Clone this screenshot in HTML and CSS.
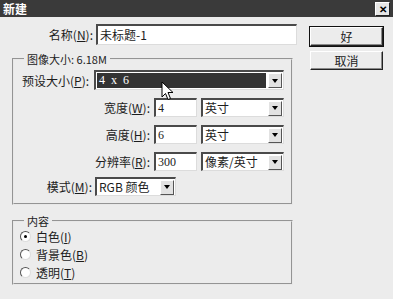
FILE: index.html
```html
<!DOCTYPE html>
<html lang="zh-CN">
<head>
  <meta charset="UTF-8" />
  <title>新建</title>
  <link rel="stylesheet" href="styles.css">
</head>
<body>
  <div class="dialog">
    <div class="titlebar">
      <span class="title">新建</span>
      <span class="close">✕</span>
    </div>
    <div class="content">
      <div class="main">
        <div class="row name-row">
          <label class="lbl name-lbl">名称(<u>N</u>):</label>
          <div class="field name-field">未标题-1</div>
        </div>

        <fieldset class="group size-group">
          <legend>图像大小: 6.18M</legend>
          <div class="row preset-row">
            <label class="lbl preset-lbl">预设大小(<u>P</u>):</label>
            <div class="field select preset-select">
              <span class="sel-value">4 x 6</span>
              <span class="drop"></span>
            </div>
          </div>
          <div class="row dim-row first">
            <label class="lbl dim-lbl">宽度(<u>W</u>):</label>
            <div class="field num">4</div>
            <div class="field select unit"><span class="opt">英寸</span><span class="drop"></span></div>
          </div>
          <div class="row dim-row">
            <label class="lbl dim-lbl">高度(<u>H</u>):</label>
            <div class="field num">6</div>
            <div class="field select unit"><span class="opt">英寸</span><span class="drop"></span></div>
          </div>
          <div class="row dim-row">
            <label class="lbl dim-lbl">分辨率(<u>R</u>):</label>
            <div class="field num">300</div>
            <div class="field select unit"><span class="opt">像素/英寸</span><span class="drop"></span></div>
          </div>
          <div class="row mode-row">
            <label class="lbl mode-lbl">模式(<u>M</u>):</label>
            <div class="field select mode"><span class="opt">RGB 颜色</span><span class="drop"></span></div>
          </div>
        </fieldset>

        <fieldset class="group fill-group">
          <legend>内容</legend>
          <div class="radio-row"><span class="radio checked"></span>白色(<u>I</u>)</div>
          <div class="radio-row"><span class="radio"></span>背景色(<u>B</u>)</div>
          <div class="radio-row"><span class="radio"></span>透明(<u>T</u>)</div>
        </fieldset>
      </div>

      <div class="side">
        <button class="btn default">好</button>
        <button class="btn">取消</button>
      </div>
    </div>

    <!-- mouse pointer over the preset list -->
    <svg class="cursor" width="13" height="20" viewBox="0 0 13 20">
      <path d="M1 1 L1 16 L4.5 12.5 L7 18.5 L9.5 17.5 L7 11.5 L12 11.5 Z" fill="#fff" stroke="#000" stroke-width="1" stroke-linejoin="miter"/>
    </svg>
  </div>
</body>
</html>
```

FILE: styles.css
```css
/* Fenêtre "Nouveau" façon Windows classique, en niveaux de gris */
:root { --bg: #ececec; --text: #1c1c1c; --dark: #3a3a3a; --shade: #8a8a8a; }
* { box-sizing: border-box; }
html, body { margin: 0; padding: 0; }
body {
  background: var(--bg);
  font-family: "Noto Sans CJK SC", "Noto Sans", sans-serif;
  font-size: 12px; color: var(--text);
  width: 393px; height: 299px; overflow: hidden;
}
u { text-decoration: underline; }

.dialog { position: relative; width: 393px; height: 299px; }

.titlebar {
  height: 17px; background: var(--dark); color: #fff;
  display: flex; align-items: center; justify-content: space-between;
  padding: 0 3px 0 3px;
}
.title { font-weight: bold; font-size: 12px; letter-spacing: 0; }
.close {
  width: 15px; height: 14px; background: #e6e6e6; color: #000;
  border-top: 1px solid #fff; border-left: 1px solid #fff;
  border-right: 1px solid #222; border-bottom: 1px solid #222;
  font-size: 10px; font-weight: bold; line-height: 12px; text-align: center;
}

.content { display: flex; padding: 7px 0 0 12px; }
.main { width: 285px; }
.side { margin-left: 13px; padding-top: 3px; display: flex; flex-direction: column; gap: 5px; }

.row { display: flex; align-items: center; }
.lbl { white-space: nowrap; line-height: 19px; }

/* champs enfoncés */
.field {
  background: #fff; height: 19px;
  border-top: 2px solid #4a4a4a; border-left: 2px solid #4a4a4a;
  border-right: 1px solid #dcdcdc; border-bottom: 1px solid #dcdcdc;
  display: flex; align-items: center; padding-left: 2px;
  font-size: 12px; line-height: 16px; white-space: nowrap;
}

.name-row { height: 21px; }
.name-lbl { width: 81px; text-align: right; margin-right: 3px; }
.name-field { width: 201px; height: 21px; }

/* cadres gravés */
.group {
  margin: 0; padding: 0; min-width: 0;
  border: 2px groove #e8e8e8;
  width: 281px;
}
.group legend {
  margin-left: 10px; padding: 0 3px;
  font-size: 11px; line-height: 12px;
}
.size-group { margin-top: 8px; padding-bottom: 7px; }
.fill-group { margin-top: 10px; padding-bottom: 2px; }

.preset-row { margin-top: 5px; height: 20px; }
.preset-lbl { margin-left: 8px; width: 72px; }
.preset-select { width: 190px; height: 20px; padding-left: 1px; }

.select { position: relative; justify-content: space-between; padding-right: 1px; }
.sel-value {
  flex: 1; height: 15px; background: #333; color: #fff;
  font-family: "Liberation Serif", serif; font-size: 12px; line-height: 15px;
  padding-left: 2px; margin-right: 2px; word-spacing: 3px;
}
.opt { font-size: 12px; }
.drop {
  width: 14px; height: 15px; background: #e2e2e2;
  border-top: 1px solid #fff; border-left: 1px solid #fff;
  border-right: 1px solid #555; border-bottom: 1px solid #555;
  display: flex; align-items: center; justify-content: center;
}
.drop::after {
  content: ""; border-left: 3px solid transparent; border-right: 3px solid transparent;
  border-top: 4px solid #000;
}

.dim-row { margin-top: 8px; }
.dim-row.first { margin-top: 8px; }
.dim-lbl { width: 136px; text-align: right; margin-right: 4px; }
.num { width: 43px; font-family: "Liberation Serif", serif; }
.unit { width: 83px; margin-left: 4px; }

.mode-row { margin-top: 6px; }
.mode-lbl { width: 78px; text-align: right; margin-right: 3px; }
.mode { width: 81px; }

/* boutons radio */
.radio-row { height: 18px; display: flex; align-items: center; padding-left: 6px; }
.radio {
  width: 11px; height: 11px; border-radius: 50%; background: #fff;
  border-top: 1px solid #555; border-left: 1px solid #555;
  border-right: 1px solid #ddd; border-bottom: 1px solid #ddd;
  margin-right: 5px; position: relative;
}
.radio.checked::after {
  content: ""; position: absolute; left: 3px; top: 3px;
  width: 3px; height: 3px; border-radius: 50%; background: #000;
}

.btn {
  width: 73px; height: 19px; padding: 0; margin: 0;
  background: var(--bg); color: var(--text);
  font-family: inherit; font-size: 12px; line-height: 15px;
  border-top: 1px solid #fff; border-left: 1px solid #fff;
  border-right: 1px solid #222; border-bottom: 1px solid #222;
  box-shadow: inset -1px -1px 0 var(--shade);
}
.btn.default {
  outline: 1px solid #111; outline-offset: 0;
}

.cursor { position: absolute; left: 161px; top: 81px; }
```
